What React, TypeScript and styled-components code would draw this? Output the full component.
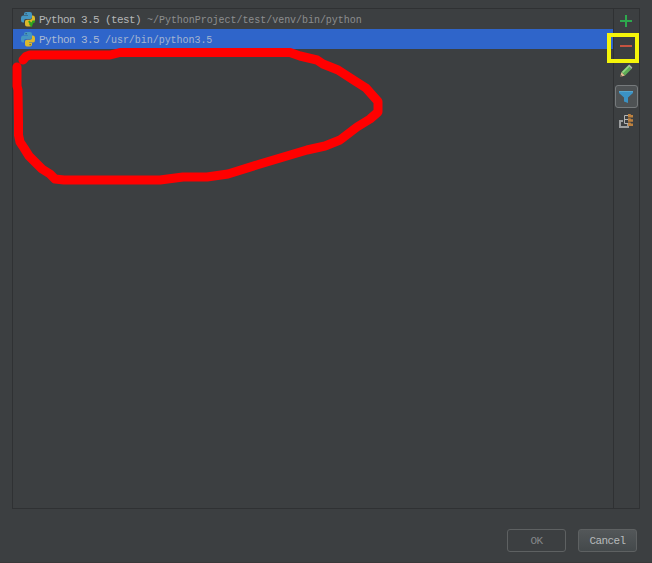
import React from 'react';
import styled, { createGlobalStyle, css } from 'styled-components';

const GlobalStyle = createGlobalStyle`
  body { margin: 0; background: #3c3f41; }
  * { box-sizing: border-box; }
`;

const Dialog = styled.main`
  position: relative;
  display: flex;
  flex-direction: column;
  width: 652px;
  height: 563px;
  padding: 8px 12px 0;
  overflow: hidden;
  background: #3c3f41;
  border-bottom: 1px solid #393839;
  font-family: 'Liberation Mono', monospace;
  font-size: 11px;
  letter-spacing: -0.6px;
`;

const Panel = styled.section`
  display: flex;
  width: 628px;
  height: 501px;
  border: 1px solid #2f3133;
`;

const List = styled.ul`
  flex: 1;
  margin: 0;
  padding: 0;
  list-style: none;
`;

const Row = styled.li<{ $selected?: boolean }>`
  display: flex;
  align-items: center;
  height: 20px;
  padding-left: 7px;
  white-space: pre;
  color: ${(p) => (p.$selected ? '#a9b9d3' : '#b4b6b7')};
  background: ${(p) => (p.$selected ? '#2f65ca' : 'transparent')};
`;

const RowIcon = styled.svg`
  width: 16px;
  height: 16px;
  margin-right: 3px;
`;

const Name = styled.span`
  padding-top: 2px;
  line-height: 20px;
`;

const Path = styled.span<{ $selected?: boolean }>`
  padding-top: 3px;
  font-size: 10px;
  letter-spacing: -0.04px;
  line-height: 19px;
  color: ${(p) => (p.$selected ? '#a5b5d0' : '#8c8e8f')};
`;

const Toolbar = styled.div`
  display: flex;
  flex-direction: column;
  align-items: flex-start;
  gap: 2px;
  width: 26px;
  padding-left: 1px;
  border-left: 1px solid #2f3133;
`;

const ToolButton = styled.button<{ $active?: boolean }>`
  display: flex;
  align-items: center;
  justify-content: flex-start;
  flex: none;
  width: 23px;
  height: 23px;
  padding: 0 0 0 2px;
  border: 1px solid transparent;
  border-radius: 3px;
  background: transparent;
  ${(p) =>
    p.$active &&
    css`
      margin-top: 1px;
      margin-bottom: -1px;
      border-color: #767a7c;
      background: #4e5254;
    `}
`;

const Footer = styled.footer`
  display: flex;
  justify-content: flex-end;
  gap: 12px;
  margin-top: 20px;
  padding-right: 3px;
`;

const Button = styled.button<{ $primary?: boolean }>`
  width: 59px;
  height: 23px;
  padding: 0;
  border: 1px solid #5e6162;
  border-radius: 3px;
  font: inherit;
  letter-spacing: inherit;
  line-height: 20px;
  color: ${(p) => (p.$primary ? '#b7babb' : '#85888a')};
  background: ${(p) => (p.$primary ? 'linear-gradient(#535759, #44494b)' : '#3c3f41')};
`;

const Scribble = styled.svg`
  position: absolute;
  left: 0;
  top: 0;
  pointer-events: none;
`;

const Highlight = styled.div`
  position: absolute;
  left: 607px;
  top: 33px;
  width: 32px;
  height: 30px;
  border: 4px solid #f5f50a;
  pointer-events: none;
`;

const PythonIcon = ({ venv }: { venv?: boolean }) => (
  <RowIcon viewBox="0 0 16 16">
    <path
      d="M4 3q0-2 2-2h4q2 0 2 2v3q0 2-2 2H6q-2 0-2 2v1.500H3Q1 11.500 1 9V7q0-2.500 2-2.500h5V4H4z"
      fill="#4596c1"
    />
    <path
      d="M12 4.500h1q2 0 2 2.500v2q0 2.500-2 2.500H9v.5h3v1.500q0 2-2 2H7q-2 0-2-2V10.500Q5 8.700 7 8.700h3q2 0 2-2z"
      fill="#dcb92b"
    />
    <rect x="5.500" y="2" width="1.300" height="1.300" fill="#315d78" />
    <rect x="9.500" y="13" width="1.300" height="1.300" fill="#6c6331" />
    {venv && <path d="M9 10l2.300 4.500L13 10.500h2" stroke="#2ca51c" strokeWidth="1.800" fill="none" />}
  </RowIcon>
);

const AddIcon = () => (
  <svg width="16" height="16">
    <path d="M8 2v12M2 8h12" stroke="#2da94d" strokeWidth="2" />
  </svg>
);

const RemoveIcon = () => (
  <svg width="16" height="16">
    <path d="M2 8h12" stroke="#c65340" strokeWidth="2" />
  </svg>
);

const EditIcon = () => (
  <svg width="16" height="16">
    <path d="M2 14l1.500-5L7 12.400z" fill="#e0bb91" />
    <path d="M2 14l.8-2.300 1.500 1.500z" fill="#50483e" />
    <path d="M3.500 9L10 2.500 13.500 6 7 12.400z" fill="#5fae57" />
    <path d="M4.500 9.500L11 3" stroke="#95d587" strokeWidth="1.700" />
    <path d="M10 2.500l1.300-1 3 3L13.500 6z" fill="#a9b5a8" />
  </svg>
);

const FilterIcon = () => (
  <svg width="16" height="16">
    <path d="M1 2h14v2L10 8.500V14l-4-1.500V8.500L1 4z" fill="#3b92c4" />
    <path d="M1 2.500h14" stroke="#56a5cd" />
  </svg>
);

const PathsIcon = () => (
  <svg width="16" height="16">
    <path d="M5 8H2v6h8v-3" fill="none" stroke="#9b9d9e" strokeWidth="2" />
    <path d="M10 2.500H6.500v8H10M6.500 6.500H10" fill="none" stroke="#b2b4b5" />
    <path d="M10 1h2.500l.5 1h2v2.500h-5zM10 5.200h2.500l.5 1h2v2.500h-5zM10 9.400h2.500l.5 1h2v2.500h-5z" fill="#bd813f" />
  </svg>
);

export default function App() {
  return (
    <>
      <GlobalStyle />
      <Dialog>
        <Panel>
          <List>
            <Row>
              <PythonIcon venv />
              <Name>Python 3.5 (test) </Name>
              <Path>~/PythonProject/test/venv/bin/python</Path>
            </Row>
            <Row $selected>
              <PythonIcon />
              <Name>Python 3.5 </Name>
              <Path $selected>/usr/bin/python3.5</Path>
            </Row>
          </List>
          <Toolbar>
            <ToolButton aria-label="Add"><AddIcon /></ToolButton>
            <ToolButton aria-label="Remove"><RemoveIcon /></ToolButton>
            <ToolButton aria-label="Edit"><EditIcon /></ToolButton>
            <ToolButton aria-label="Filter" $active><FilterIcon /></ToolButton>
            <ToolButton aria-label="Show paths"><PathsIcon /></ToolButton>
          </Toolbar>
        </Panel>
        <Footer>
          <Button>OK</Button>
          <Button $primary>Cancel</Button>
        </Footer>
        <Scribble width="400" height="190">
          <path
            d="M23 60L26 56.500 30 55H110L120 52.500H290L300 56 317 60 323 64 338 70 355 81 366 88 378 101.500V112L370 119 357 127 340 140 325 146 307 150 260 164 228 174 207 177H183L160 180H64L55 179 50 174 42 169 29 156 24 148 20 142 18.500 135V122L18 90 17 86V67"
            fill="none"
            stroke="#ff0000"
            strokeWidth="9"
            strokeLinecap="round"
            strokeLinejoin="round"
          />
        </Scribble>
        <Highlight />
      </Dialog>
    </>
  );
}
